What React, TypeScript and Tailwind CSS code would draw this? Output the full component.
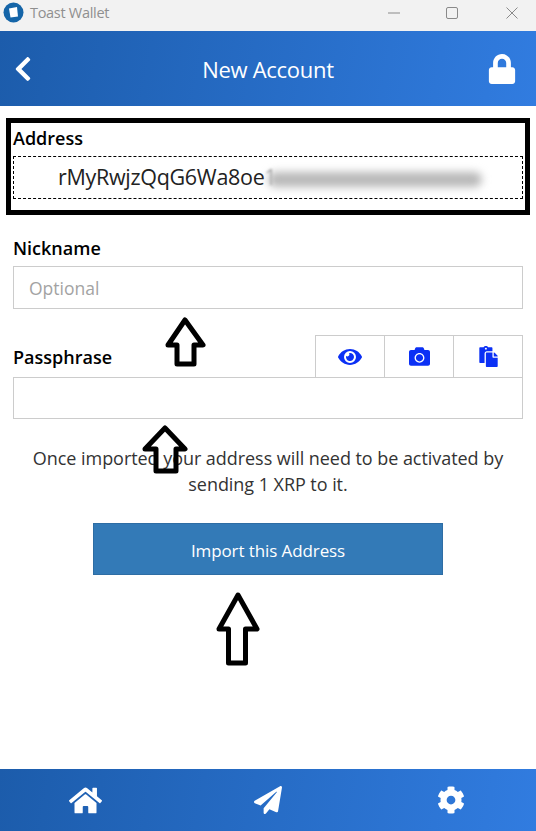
import React from 'react';
import { FaChevronLeft, FaLock, FaEye, FaCamera, FaPaste, FaHome, FaPaperPlane, FaCog } from 'react-icons/fa';

// hand-drawn outline arrows sitting on top of the screenshot
function UpArrow({ className, w, h, d }: { className: string; w: number; h: number; d: string }) {
  return (
    <svg className={`absolute ${className}`} width={w} height={h} viewBox={`0 0 ${w} ${h}`} fill="none">
      <path d={d} fill="none" stroke="#000" strokeWidth="5" strokeLinejoin="round" />
    </svg>
  );
}

function Label({ children }: { children: React.ReactNode }) {
  return <span className="text-[18px] leading-[24px] font-semibold text-black">{children}</span>;
}

export default function App() {
  return (
    <div className="relative h-[831px] w-[536px] flex flex-col overflow-hidden bg-white font-['Open_Sans',sans-serif]">
      {/* window title bar */}
      <div className="h-[31px] shrink-0 bg-[#f2f2f2] flex items-center pl-[3px] pb-[6px]">
        <svg width="21" height="21" viewBox="0 0 21 21">
          <circle cx="10.5" cy="10.5" r="10" fill="#1565a8" />
          <path d="M6 6.5 L14 5 L15 14.5 L7.5 15.5 Z" fill="#fff" />
        </svg>
        <span className="ml-[6px] text-[14.5px] tracking-[-0.3px] text-[#8f8f8f]">Toast Wallet</span>
        <div className="ml-auto flex items-center">
          <svg width="14" height="14" viewBox="0 0 14 14" className="mr-[44px]">
            <path d="M1 7h12" stroke="#8a8a8a" strokeWidth="1" />
          </svg>
          <svg width="14" height="14" viewBox="0 0 14 14" className="mr-[46px]">
            <rect x="1.5" y="1.5" width="11" height="11" rx="1.5" fill="none" stroke="#8a8a8a" />
          </svg>
          <svg width="14" height="14" viewBox="0 0 14 14" className="mr-[17px]">
            <path d="M1.5 1.5l11 11M12.5 1.5l-11 11" stroke="#8a8a8a" />
          </svg>
        </div>
      </div>

      {/* header */}
      <header className="h-[75px] shrink-0 bg-[linear-gradient(100deg,#1c5cab,#317ce0)] flex items-center justify-between px-[14px] text-white">
        <FaChevronLeft className="text-[28px] ml-[-5px] mr-[12px]" />
        <h1 className="text-[22px] font-normal tracking-[-0.3px] pt-[2px]">New Account</h1>
        <FaLock className="text-[30px] mr-[5px]" />
      </header>

      <main className="flex-1 flex flex-col">
        {/* address, boxed */}
        <section className="mt-[12px] mx-[6px] h-[97px] border-[5px] border-black px-[2px] pt-[3px]">
          <Label>Address</Label>
          <div className="relative mt-[5px] h-[43px] border border-dashed border-black flex items-center pl-[44px] text-[21.5px] tracking-[-0.3px] text-[#222]">
            rMyRwjzQqG6Wa8oe<span className="text-[#aaaaaa] blur-[1px]">1</span>
            <div className="absolute left-[254px] top-[15px] h-[15px] w-[214px] rounded-full bg-[#b8b8b8] blur-[4px]" />
          </div>
        </section>

        <section className="mt-[21px] px-[13px]">
          <Label>Nickname</Label>
          <div className="mt-[5px] h-[43px] border border-[#cccccc] flex items-center pl-[15px] pt-[2px] text-[17.5px] text-[#a3a3a3]">
            Optional
          </div>
        </section>

        <section className="mt-[26px] px-[13px]">
          <div className="flex items-end justify-between">
            <span className="pb-[7px]"><Label>Passphrase</Label></span>
            <div className="flex h-[42px] w-[208px] border border-b-0 border-[#cccccc] text-[#0b30f5] text-[21px]">
              <div className="flex-1 flex items-center justify-center border-r border-[#cccccc]"><FaEye className="text-[24px]" /></div>
              <div className="flex-1 flex items-center justify-center border-r border-[#cccccc]"><FaCamera /></div>
              <div className="flex-1 flex items-center justify-center"><FaPaste /></div>
            </div>
          </div>
          <div className="h-[42px] border border-[#cccccc]" />
        </section>

        <p className="mt-[26px] px-[24px] text-center text-[18px] leading-[26px] tracking-[-0.05px] text-[#333]">
          Once imported your address will need to be activated by sending 1 XRP to it.
        </p>

        <button className="mt-[26px] mx-auto h-[52px] w-[350px] pt-[3px] bg-[#337ab7] border border-[#2e6da4] text-white text-[17px] tracking-[-0.1px]">
          Import this Address
        </button>
      </main>

      {/* bottom nav */}
      <nav className="h-[62px] shrink-0 bg-[linear-gradient(100deg,#1c5cab,#317ce0)] flex items-center text-white text-[30px]">
        <div className="flex-1 flex justify-center"><FaHome className="text-[33px] mr-[8px]" /></div>
        <div className="flex-1 flex justify-center"><FaPaperPlane className="text-[28px]" /></div>
        <div className="flex-1 flex justify-center"><FaCog className="text-[28px] ml-[8px]" /></div>
      </nav>

      <UpArrow className="left-[165px] top-[317px]" w={41} h={50} d="M20 3 L38 28 L29 28 L29 47 L12 47 L12 28 L3 28 Z" />
      <UpArrow className="left-[141px] top-[425px]" w={48} h={50} d="M24 3 L44 24 L35 24 L35 46 L15 46 L15 24 L4 24 Z" />
      <UpArrow className="left-[215px] top-[592px]" w={46} h={74} d="M23 3 L42 37 L30.5 37 L30.5 71 L13.5 71 L13.5 37 L4 37 Z" />
    </div>
  );
}
